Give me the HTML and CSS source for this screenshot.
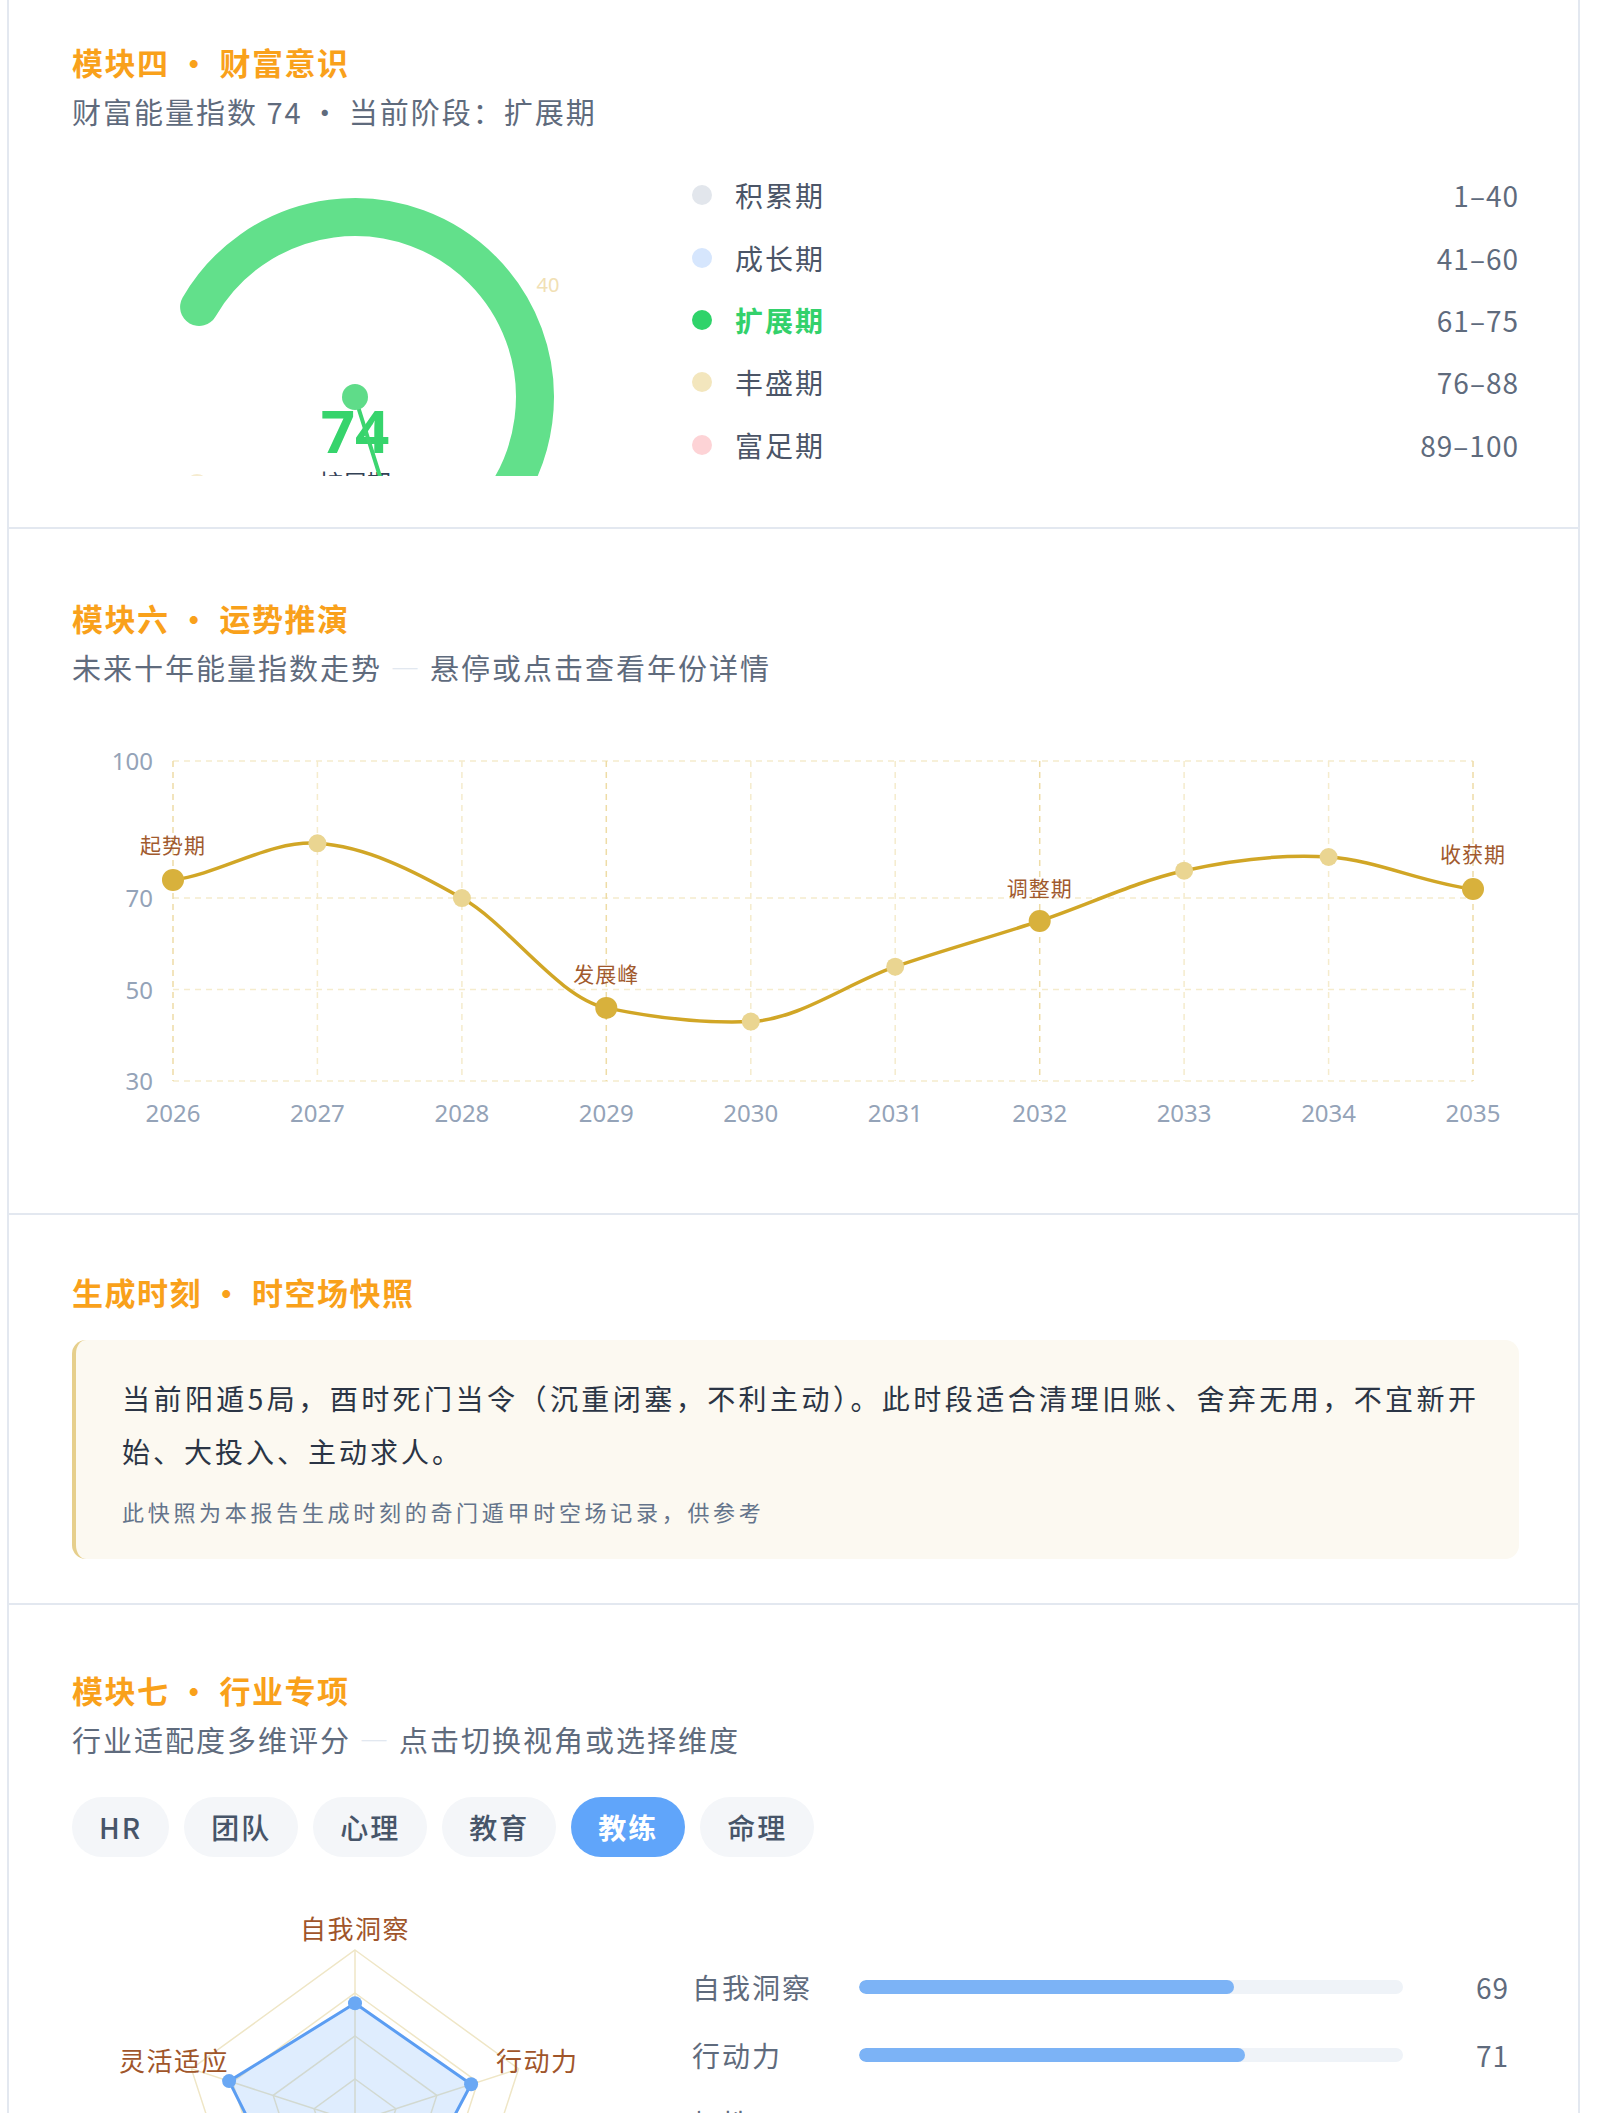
FILE: index.html
```html
<!DOCTYPE html>
<html lang="zh-CN">
<head>
<meta charset="utf-8">
<title>报告</title>
<link rel="stylesheet" href="styles.css">
</head>
<body>
<div class="card">

  <section class="module m-wealth">
    <h2 class="mod-title">模块四<span class="sep">·</span>财富意识</h2>
    <p class="mod-sub">财富能量指数 74<span class="sep sep-sub">·</span>当前阶段：扩展期</p>
    <div class="split">
      <div class="gauge">
        <svg class="gauge-svg" width="568" height="312" viewBox="0 0 568 312">
          <path d="M127.1 143 A180 180 0 1 1 373 388.9" fill="none" stroke="#62e08b" stroke-width="38" stroke-linecap="round"/>
          <text x="476" y="128" class="g-tick">40</text>
          <circle cx="125" cy="321" r="11" fill="#f6ecd0"/>
          <text x="283" y="289" class="g-value">74</text>
          <text x="283" y="328" class="g-stage">扩展期</text>
          <line x1="283" y1="233" x2="311" y2="322" stroke="#3cd56f" stroke-width="4" stroke-linecap="round"/>
          <circle cx="283" cy="233" r="13" fill="#5fdc89"/>
        </svg>
      </div>
      <ul class="legend">
        <li class="legend-row"><span class="ldot c1"></span><span class="lname">积累期</span><span class="lrange">1–40</span></li>
        <li class="legend-row"><span class="ldot c2"></span><span class="lname">成长期</span><span class="lrange">41–60</span></li>
        <li class="legend-row is-active"><span class="ldot c3"></span><span class="lname">扩展期</span><span class="lrange">61–75</span></li>
        <li class="legend-row"><span class="ldot c4"></span><span class="lname">丰盛期</span><span class="lrange">76–88</span></li>
        <li class="legend-row"><span class="ldot c5"></span><span class="lname">富足期</span><span class="lrange">89–100</span></li>
      </ul>
    </div>
  </section>

  <section class="module m-trend">
    <h2 class="mod-title">模块六<span class="sep">·</span>运势推演</h2>
    <p class="mod-sub">未来十年能量指数走势 <span class="dash">—</span> 悬停或点击查看年份详情</p>
    <div class="trend">
      <svg class="trend-svg" width="1447" height="420" viewBox="0 0 1447 420">
        <g class="grid">
          <line x1="101" y1="31" x2="1401" y2="31"/>
          <line x1="101" y1="168.1" x2="1401" y2="168.1"/>
          <line x1="101" y1="259.6" x2="1401" y2="259.6"/>
          <line x1="101" y1="351" x2="1401" y2="351"/>
          <line class="key" x1="101" y1="31" x2="101" y2="351"/>
          <line x1="245.4" y1="31" x2="245.4" y2="351"/>
          <line x1="389.9" y1="31" x2="389.9" y2="351"/>
          <line class="key" x1="534.3" y1="31" x2="534.3" y2="351"/>
          <line x1="678.8" y1="31" x2="678.8" y2="351"/>
          <line x1="823.2" y1="31" x2="823.2" y2="351"/>
          <line class="key" x1="967.7" y1="31" x2="967.7" y2="351"/>
          <line x1="1112.1" y1="31" x2="1112.1" y2="351"/>
          <line x1="1256.6" y1="31" x2="1256.6" y2="351"/>
          <line class="key" x1="1401" y1="31" x2="1401" y2="351"/>
        </g>
        <g class="y-labels">
          <text x="81" y="40">100</text>
          <text x="81" y="177">70</text>
          <text x="81" y="269">50</text>
          <text x="81" y="360">30</text>
        </g>
        <g class="x-labels">
          <text x="101" y="392">2026</text>
          <text x="245.4" y="392">2027</text>
          <text x="389.9" y="392">2028</text>
          <text x="534.3" y="392">2029</text>
          <text x="678.8" y="392">2030</text>
          <text x="823.2" y="392">2031</text>
          <text x="967.7" y="392">2032</text>
          <text x="1112.1" y="392">2033</text>
          <text x="1256.6" y="392">2034</text>
          <text x="1401" y="392">2035</text>
        </g>
        <path class="curve" d="M101 149.9 C149.15 143.8 197.25 110.27 245.4 113.3 C293.55 116.33 341.75 140.67 389.9 168.1 C438.05 195.53 486.15 267.9 534.3 277.9 C582.45 287.9 630.65 293.6 678.8 291.6 C726.95 289.6 775.05 253.47 823.2 236.7 C871.35 219.93 919.55 207 967.7 191 C1015.85 175 1063.95 151.37 1112.1 140.7 C1160.25 130.03 1208.45 123.95 1256.6 127 C1304.75 130.05 1352.85 153.67 1401 159"/>
        <g class="pt-small">
          <circle cx="245.4" cy="113.3" r="9"/>
          <circle cx="389.9" cy="168.1" r="9"/>
          <circle cx="678.8" cy="291.6" r="9"/>
          <circle cx="823.2" cy="236.7" r="9"/>
          <circle cx="1112.1" cy="140.7" r="9"/>
          <circle cx="1256.6" cy="127" r="9"/>
        </g>
        <g class="pt-key">
          <circle cx="101" cy="149.9" r="11"/>
          <circle cx="534.3" cy="277.9" r="11"/>
          <circle cx="967.7" cy="191" r="11"/>
          <circle cx="1401" cy="159" r="11"/>
        </g>
        <g class="pt-labels">
          <text x="101" y="123">起势期</text>
          <text x="534.3" y="252">发展峰</text>
          <text x="967.7" y="166">调整期</text>
          <text x="1401" y="132">收获期</text>
        </g>
      </svg>
    </div>
  </section>

  <section class="module m-snapshot">
    <h2 class="mod-title">生成时刻<span class="sep">·</span>时空场快照</h2>
    <div class="snapshot">
      <p class="snap-text">当前阳遁5局，酉时死门当令（沉重闭塞，不利主动）。此时段适合清理旧账、舍弃无用，不宜新开始、大投入、主动求人。</p>
      <p class="snap-note">此快照为本报告生成时刻的奇门遁甲时空场记录，供参考</p>
    </div>
  </section>

  <section class="module m-industry">
    <h2 class="mod-title">模块七<span class="sep">·</span>行业专项</h2>
    <p class="mod-sub">行业适配度多维评分 <span class="dash">—</span> 点击切换视角或选择维度</p>
    <div class="tabs">
      <button class="tab">HR</button>
      <button class="tab">团队</button>
      <button class="tab">心理</button>
      <button class="tab">教育</button>
      <button class="tab is-active">教练</button>
      <button class="tab">命理</button>
    </div>
    <div class="split split-industry">
      <div class="radar">
        <svg class="radar-svg" width="568" height="240" viewBox="0 0 568 240">
          <g class="r-grid">
            <polygon points="283,50 446.6,168.9 384.1,361.1 181.9,361.1 119.4,168.9"/>
            <polygon points="283,93 405.7,182.1 358.8,326.4 207.2,326.4 160.3,182.1"/>
            <polygon points="283,136 364.8,195.4 333.6,291.6 232.4,291.6 201.2,195.4"/>
            <polygon points="283,179 323.9,208.7 308.3,256.8 257.7,256.8 242.1,208.7"/>
            <line x1="283" y1="222" x2="283" y2="50"/>
            <line x1="283" y1="222" x2="446.6" y2="168.9"/>
            <line x1="283" y1="222" x2="384.1" y2="361.1"/>
            <line x1="283" y1="222" x2="181.9" y2="361.1"/>
            <line x1="283" y1="222" x2="119.4" y2="168.9"/>
          </g>
          <polygon class="r-area" points="283,103.3 399.1,184.3 338.6,298.5 220.5,308 157.1,181.1"/>
          <g class="r-pts">
            <circle cx="283" cy="103.3" r="7"/>
            <circle cx="399.1" cy="184.3" r="7"/>
            <circle cx="157.1" cy="181.1" r="7"/>
          </g>
          <g class="r-labels">
            <text x="283" y="39" text-anchor="middle">自我洞察</text>
            <text x="424" y="171" text-anchor="start">行动力</text>
            <text x="157" y="171" text-anchor="end">灵活适应</text>
          </g>
        </svg>
      </div>
      <div class="bars">
        <div class="bar-row"><span class="bar-label">自我洞察</span><span class="bar-track"><span class="bar-fill" style="width:69%"></span></span><span class="bar-value">69</span></div>
        <div class="bar-row"><span class="bar-label">行动力</span><span class="bar-track"><span class="bar-fill" style="width:71%"></span></span><span class="bar-value">71</span></div>
        <div class="bar-row"><span class="bar-label">韧性</span><span class="bar-track"><span class="bar-fill" style="width:55%"></span></span><span class="bar-value">55</span></div>
      </div>
    </div>
  </section>

</div>
</body>
</html>
```

FILE: styles.css
```css
* { box-sizing: border-box; }

body {
  margin: 0;
  background: #ffffff;
  font-family: "Noto Sans CJK SC", "Noto Sans", sans-serif;
  color: #334155;
}

.card {
  margin-left: 7px;
  width: 1573px;
  border-left: 2px solid #e3e8f0;
  border-right: 2px solid #e3e8f0;
}

.module {
  padding-left: 63px;
  padding-right: 59px;
  border-top: 2px solid #e3e8f0;
}
.module:first-child { border-top: none; }

.m-wealth { padding-top: 42px; padding-bottom: 51px; }
.m-trend { padding-top: 69px; padding-bottom: 63px; }
.m-snapshot { padding-top: 57px; padding-bottom: 44px; }
.m-industry { padding-top: 65px; padding-bottom: 0; }

.mod-title {
  margin: 0;
  font-size: 31px;
  line-height: 40px;
  font-weight: 700;
  letter-spacing: 1.5px;
  color: #f9a11b;
}

.sep {
  display: inline-block;
  width: 50px;
  text-align: center;
}
.sep-sub { width: 46px; }

.mod-sub {
  margin: 9px 0 0;
  font-size: 29px;
  line-height: 40px;
  letter-spacing: 2px;
  color: #5f6b7d;
}

.dash { color: #e2e8f0; }

/* ---- split layout ---- */
.split {
  display: grid;
  grid-template-columns: 568px 1fr;
  column-gap: 52px;
  margin-top: 33px;
}

.gauge { height: 312px; overflow: hidden; }
.gauge-svg { display: block; }
.g-tick {
  font-family: "Noto Sans", sans-serif;
  font-size: 20px;
  fill: #f1e0b4;
  text-anchor: middle;
}
.g-value {
  font-family: "Noto Sans", sans-serif;
  font-size: 60px;
  font-weight: 700;
  fill: #36d46c;
  text-anchor: middle;
}
.g-stage {
  font-family: "Noto Sans CJK SC", sans-serif;
  font-size: 24px;
  fill: #334155;
  text-anchor: middle;
}

.legend {
  list-style: none;
  margin: 0;
  padding: 0;
}
.legend-row {
  display: flex;
  align-items: center;
  height: 62.4px;
}
.ldot {
  width: 20px;
  height: 20px;
  border-radius: 50%;
  margin-right: 23px;
  flex: none;
}
.c1 { background: #e2e6ec; }
.c2 { background: #d6e6fd; }
.c3 { background: #2fd36a; }
.c4 { background: #f3e6bd; }
.c5 { background: #fdd3d6; }

.lname {
  font-size: 28px;
  letter-spacing: 2px;
  color: #4b5567;
}
.is-active .lname {
  color: #33d16b;
  font-weight: 700;
}
.lrange {
  margin-left: auto;
  font-size: 28px;
  letter-spacing: 1px;
  color: #5f6b7d;
}

/* ---- trend chart ---- */
.trend { margin-top: 43px; height: 420px; }
.trend-svg { display: block; }
.grid line {
  stroke: #f5eccd;
  stroke-width: 1.5;
  stroke-dasharray: 6 5;
}
.grid line.key { stroke: #eedca6; }
.y-labels text {
  font-family: "Noto Sans", sans-serif;
  font-size: 24px;
  fill: #94a3b8;
  text-anchor: end;
}
.x-labels text {
  font-family: "Noto Sans", sans-serif;
  font-size: 24px;
  fill: #94a3b8;
  text-anchor: middle;
}
.curve {
  fill: none;
  stroke: #d1a626;
  stroke-width: 3.5;
}
.pt-small circle { fill: #ead591; }
.pt-key circle { fill: #d8b13c; }
.pt-labels text {
  font-family: "Noto Sans CJK SC", sans-serif;
  font-size: 21px;
  letter-spacing: 1px;
  fill: #a15a2e;
  text-anchor: middle;
}

/* ---- snapshot ---- */
.snapshot {
  margin-top: 28px;
  background: #fcf9f1;
  border-left: 4px solid #e6cf8c;
  border-radius: 14px;
  padding: 32px 40px 31px 46px;
}
.snap-text {
  margin: 0;
  font-size: 28px;
  line-height: 53px;
  letter-spacing: 3px;
  color: #2b3545;
  text-align: justify;
}
.snap-note {
  margin: 16px 0 0;
  font-size: 22px;
  line-height: 34px;
  letter-spacing: 3.7px;
  color: #64748b;
}

/* ---- industry ---- */
.tabs {
  display: flex;
  gap: 15px;
  margin-top: 38px;
}
.tab {
  height: 60px;
  padding: 0 27px;
  border: none;
  border-radius: 30px;
  background: #f4f6f9;
  font-family: inherit;
  font-size: 28px;
  font-weight: 500;
  letter-spacing: 2px;
  color: #475569;
  display: flex;
  align-items: center;
}
.tab.is-active {
  background: #60a5fa;
  color: #ffffff;
  font-weight: 700;
}

.split-industry { margin-top: 43px; }
.radar { height: 240px; }
.radar-svg { display: block; }
.r-grid polygon, .r-grid line {
  fill: none;
  stroke: #efe6c6;
  stroke-width: 1.5;
}
.r-area {
  fill: rgba(96, 165, 250, 0.2);
  stroke: #5b9df2;
  stroke-width: 3;
}
.r-pts circle { fill: #6aa8f4; }
.r-labels text {
  font-family: "Noto Sans CJK SC", sans-serif;
  font-size: 26px;
  letter-spacing: 1.5px;
  fill: #a0552a;
}

.bars { padding-top: 53px; }
.bar-row {
  display: grid;
  grid-template-columns: 167px 544px 1fr;
  align-items: center;
  height: 68px;
}
.bar-label {
  font-size: 28px;
  letter-spacing: 2px;
  color: #5f6b7d;
}
.bar-track {
  display: block;
  height: 14px;
  border-radius: 7px;
  background: #eff3f8;
  overflow: hidden;
}
.bar-fill {
  display: block;
  height: 100%;
  border-radius: 7px;
  background: #7cb3f6;
}
.bar-value {
  text-align: right;
  padding-right: 10px;
  font-size: 28px;
  letter-spacing: 1px;
  color: #5f6b7d;
}
```
